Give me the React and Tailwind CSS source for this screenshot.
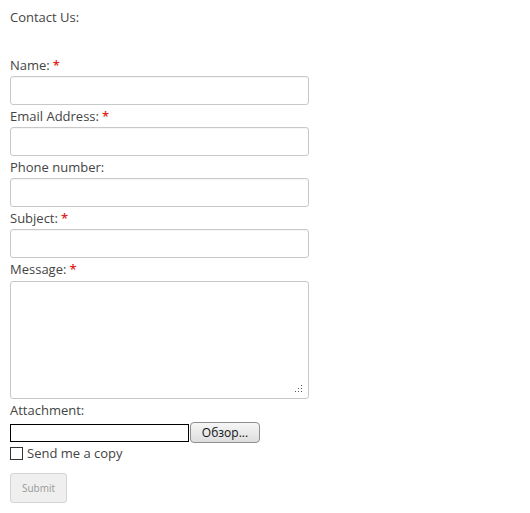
import React from "react";

function Field({ label, required, children }) {
    return (
        <div className="mb-[2px]">
            <label className="block h-[20px] pb-[2px] leading-[18px]">
                {label}
                {required && <span className="ml-[3px] font-semibold text-[#e2231a]">*</span>}
            </label>
            {children}
        </div>
    );
}

function TextInput() {
    return (
        <input
            type="text"
            className="block h-[29px] w-[299px] rounded-[3px] border border-[#c8c8c8] bg-white px-2 shadow-[inset_0_1px_1px_rgba(0,0,0,0.04)] outline-none"
        />
    );
}

function ResizeDots() {
    const dots = [
        [8, 2], [8, 5], [5, 5], [8, 8], [5, 8], [2, 8],
    ];
    return (
        <svg className="pointer-events-none absolute right-[5px] bottom-[5px]" width="11" height="11" viewBox="0 0 11 11">
            {dots.map(([x, y], i) => (
                <rect key={i} x={x} y={y} width="1" height="1" fill="#555" />
            ))}
        </svg>
    );
}

export default function App() {
    return (
        <div className="bg-white px-[10px] pt-[7px] text-[13px] text-[#444] [font-family:'Open_Sans',sans-serif]">
            <p className="h-[20px] leading-[20px]">Contact Us:</p>
            <form className="mt-[29px]" onSubmit={(e) => e.preventDefault()}>
                <Field label="Name:" required>
                    <TextInput />
                </Field>
                <Field label="Email Address:" required>
                    <TextInput />
                </Field>
                <Field label="Phone number:">
                    <TextInput />
                </Field>
                <Field label="Subject:" required>
                    <TextInput />
                </Field>
                <Field label="Message:" required>
                    <div className="relative mt-[1px] w-[299px]">
                        <textarea className="block h-[118px] w-[299px] resize-none rounded-[3px] border border-[#c8c8c8] bg-white p-2 outline-none" />
                        <ResizeDots />
                    </div>
                </Field>
                <div>
                    <label className="block h-[20px] pb-[2px] leading-[18px]">Attachment:</label>
                    <div className="mt-[1px] flex items-center">
                        <div className="h-[18px] w-[179px] border border-black bg-white" />
                        <button
                            type="button"
                            className="ml-[1px] h-[21px] w-[70px] rounded-[4px] border border-[#8e8e8e] bg-gradient-to-b from-[#f6f6f6] to-[#dedede] text-[12px] leading-[19px] text-[#111]"
                        >
                            Обзор...
                        </button>
                    </div>
                </div>
                <label className="mt-[2px] flex h-[16px] items-center">
                    <span className="h-[13px] w-[13px] border border-[#333] bg-white" />
                    <span className="ml-[4px] leading-[16px]">Send me a copy</span>
                </label>
                <button
                    type="submit"
                    className="mt-[12px] h-[30px] w-[57px] rounded-[3px] border border-[#d4d4d4] bg-[#efefef] text-[10px] text-[#999]"
                >
                    Submit
                </button>
            </form>
        </div>
    );
}
